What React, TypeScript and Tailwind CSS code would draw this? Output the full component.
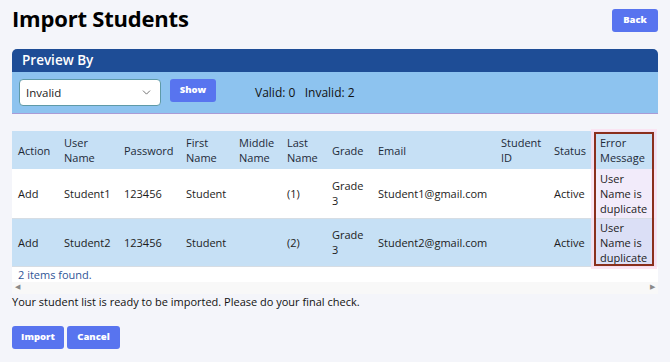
import { ChevronDown } from 'lucide-react'

const columns = [
  { label: ['Action'], w: 'w-[46px]' },
  { label: ['User', 'Name'], w: 'w-[60px]' },
  { label: ['Password'], w: 'w-[62px]' },
  { label: ['First', 'Name'], w: 'w-[53px]' },
  { label: ['Middle', 'Name'], w: 'w-[48px]' },
  { label: ['Last', 'Name'], w: 'w-[45px]' },
  { label: ['Grade'], w: 'w-[46px]' },
  { label: ['Email'], w: 'w-[123px]' },
  { label: ['Student', 'ID'], w: 'w-[53px]' },
  { label: ['Status'], w: 'w-[46px]' },
  { label: ['Error', 'Message'], w: 'w-[62px]' },
]

const rows = [
  ['Add', 'Student1', '123456', 'Student', '', '(1)', 'Grade 3', 'Student1@gmail.com', '', 'Active', 'User Name is duplicate'],
  ['Add', 'Student2', '123456', 'Student', '', '(2)', 'Grade 3', 'Student2@gmail.com', '', 'Active', 'User Name is duplicate'],
]

function Btn({ children, className = '' }: { children: string; className?: string }) {
  return (
    <button className={`rounded-[3px] bg-[#5874ef] text-[9.5px] font-extrabold text-white ${className}`}>
      {children}
    </button>
  )
}

export default function App() {
  return (
    <div className="h-[362px] w-[670px] overflow-hidden bg-[#f4f5fa] px-3 font-['Open_Sans',sans-serif] text-[#1c1c1c]">
      <div className="flex items-start justify-between pt-[3px]">
        <h1 className="text-[22px] font-bold leading-[30px] tracking-[-0.2px] text-black">Import Students</h1>
        <Btn className="mt-[6px] h-[23px] w-[46px]">Back</Btn>
      </div>

      <div className="mt-[16px] overflow-hidden rounded-t-[5px] border-b border-[#a99bd6]">
        <div className="flex h-[23px] items-center bg-[#1e4d96] px-[10px] text-[13.5px] font-semibold text-white">
          Preview By
        </div>
        <div className="flex h-[41px] items-center bg-[#8dc3ef] px-[7px]">
          <div className="flex h-[27px] w-[142px] items-center justify-between rounded-[4px] border border-[#5e9aa8] bg-white pl-[6px] pr-[7px] text-[11.5px]">
            Invalid
            <ChevronDown size={13} strokeWidth={1.5} className="text-[#555]" />
          </div>
          <Btn className="ml-[9px] mt-[7px] h-[23px] w-[46px] self-start">Show</Btn>
          <span className="ml-[39px] text-[12px] text-[#111]">Valid: 0&nbsp;&nbsp;&nbsp;Invalid: 2</span>
        </div>
      </div>

      <div className="mt-[17px] bg-[#eef9fb]">
        <div className="relative">
          <table className="w-[644px] table-fixed border-collapse text-[11px] leading-[15px]">
            <thead>
              <tr className="h-[38px] bg-[#c6e0f5] text-[#1d2a38]">
                {columns.map((c) => (
                  <th key={c.label.join()} className={`${c.w} px-[6px] text-left align-middle font-medium`}>
                    {c.label.map((l) => (
                      <div key={l}>{l}</div>
                    ))}
                  </th>
                ))}
              </tr>
            </thead>
            <tbody>
              {rows.map((r, i) => (
                <tr key={i} className={`${i === 0 ? 'h-[49px] bg-white' : 'h-[48px] bg-[#c6e0f5]'} border-b border-[#d6dde4]`}>
                  {r.map((v, j) => (
                    <td key={j} className={`px-[6px] align-middle ${j === 10 ? 'bg-[#e9def6]/60' : ''}`}>
                      {v}
                    </td>
                  ))}
                </tr>
              ))}
            </tbody>
          </table>
          <div className="absolute left-[579px] top-[-2px] h-[140px] w-[66px] border-[3px] border-[#fbe0f0]/80">
            <div className="h-full w-full border-2 border-[#8a2f1c]" />
          </div>
        </div>
        <div className="bg-white px-[6px] pt-[1px] text-[11px] leading-[14px] text-[#2f5597]">2 items found.</div>
        <div className="flex h-[12px] items-center justify-between bg-[#f8f8f8] px-[3px] text-[7px] text-[#8a8a8a]">
          <span>◀</span>
          <span>▶</span>
        </div>
      </div>

      <p className="mt-0 text-[11px] leading-[15px] text-[#111]">
        Your student list is ready to be imported. Please do your final check.
      </p>

      <div className="mt-[17px] flex gap-[3px]">
        <Btn className="h-[23px] w-[52px]">Import</Btn>
        <Btn className="h-[23px] w-[53px]">Cancel</Btn>
      </div>
    </div>
  )
}
